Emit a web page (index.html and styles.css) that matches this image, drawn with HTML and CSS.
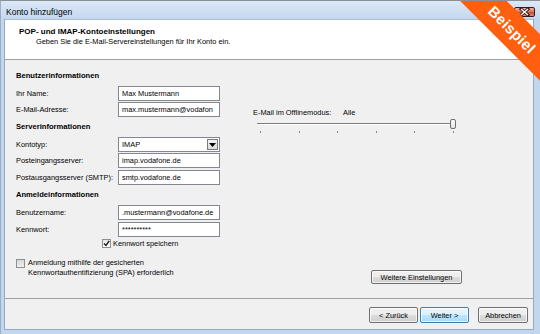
FILE: index.html
```html
<!DOCTYPE html>
<html lang="de">
<head>
<meta charset="utf-8">
<link rel="stylesheet" href="styles.css">
</head>
<body>
<div class="window">
  <div class="titlebar">
    <span class="title">Konto hinzufügen</span>
    <div class="close">
      <svg width="11" height="8" viewBox="0 0 11 8"><path d="M2 1 L9 7 M9 1 L2 7" stroke="#3a1410" stroke-width="3" stroke-linecap="square"/><path d="M2 1 L9 7 M9 1 L2 7" stroke="#ffffff" stroke-width="1.4"/></svg>
    </div>
  </div>
  <div class="client">
    <div class="header">
      <div class="h-title">POP- und IMAP-Kontoeinstellungen</div>
      <div class="h-sub">Geben Sie die E-Mail-Servereinstellungen für Ihr Konto ein.</div>
    </div>
    <div class="body">
      <div class="cols">
        <div class="left">
          <div class="section s1">Benutzerinformationen</div>
          <div class="row m5"><span class="label">Ihr Name:</span><div class="field">Max Mustermann</div></div>
          <div class="row m1"><span class="label">E-Mail-Adresse:</span><div class="field">max.mustermann@vodafon</div></div>
          <div class="section m5">Serverinformationen</div>
          <div class="row m5"><span class="label">Kontotyp:</span><div class="field select"><span>IMAP</span><span class="drop"><svg width="7" height="4" viewBox="0 0 7 4"><path d="M0 0 H7 L3.5 4 Z" fill="#000"/></svg></span></div></div>
          <div class="row m1"><span class="label">Posteingangsserver:</span><div class="field">imap.vodafone.de</div></div>
          <div class="row m2"><span class="label">Postausgangsserver (SMTP):</span><div class="field">smtp.vodafone.de</div></div>
          <div class="section m5">Anmeldeinformationen</div>
          <div class="row m5"><span class="label">Benutzername:</span><div class="field">.mustermann@vodafone.de</div></div>
          <div class="row m2"><span class="label">Kennwort:</span><div class="field">**********</div></div>
          <div class="check-row">
            <span class="checkbox"><svg width="7" height="7" viewBox="0 0 7 7"><path d="M1 3.5 L3 5.5 L6.2 0.8" stroke="#1a1a1a" stroke-width="1.4" fill="none"/></svg></span>
            <span>Kennwort speichern</span>
          </div>
        </div>
        <div class="right">
          <div class="offline"><span class="off-label">E-Mail im Offlinemodus:</span><span>Alle</span></div>
          <div class="slider">
            <div class="track"></div>
            <div class="thumb"></div>
          </div>
          <div class="ticks"><i></i><i></i><i></i><i></i><i></i><i></i></div>
        </div>
      </div>
      <div class="bottom-row">
        <div class="spa">
          <span class="checkbox off"></span>
          <span class="spa-text">Anmeldung mithilfe der gesicherten<br>Kennwortauthentifizierung (SPA) erforderlich</span>
        </div>
        <button class="btn more">Weitere Einstellungen</button>
      </div>
    </div>
    <div class="footer">
      <button class="btn">&lt; Zurück</button>
      <button class="btn default">Weiter &gt;</button>
      <button class="btn cancel">Abbrechen</button>
    </div>
  </div>
  <div class="ribbon">Beispiel</div>
</div>
</body>
</html>
```
FILE: styles.css
```css
* { box-sizing: border-box; }
html, body { margin: 0; padding: 0; }
body {
  width: 540px;
  height: 334px;
  overflow: hidden;
  font-family: "Liberation Sans", Arial, sans-serif;
  font-size: 7.4px;
  color: #000;
}
.window {
  position: relative;
  width: 540px;
  height: 334px;
  overflow: hidden;
  background: #c2d6ee;
  border-top: 1px solid #8a8f96;
  border-left: 1px solid #9aaec6;
}
.titlebar {
  height: 18px;
  display: flex;
  align-items: center;
  padding-left: 5px;
  background: linear-gradient(#dbe8f6, #c4d8ef);
}
.title { font-size: 8.5px; color: #000; margin-top: 4px; }
.close {
  margin-left: auto;
  margin-right: 5px;
  margin-top: 3px;
  width: 21px;
  height: 10px;
  border: 1px solid #3f1a14;
  border-radius: 2px;
  background: linear-gradient(#eab0a4, #d4735f 50%, #c44a36 51%, #d88a72);
  display: flex;
  align-items: center;
  justify-content: center;
}
.close svg { display: block; }
.client {
  margin: 0 6px 0 3px;
  width: 530px;
  border-left: 1px solid #93a9c4;
  border-right: 1px solid #93a9c4;
  border-bottom: 1px solid #93a9c4;
}
.header {
  height: 41px;
  background: #fff;
  border-top: 1px solid #a8c0dc;
  border-bottom: 1px solid #a0a0a0;
  padding: 7px 0 0 14px;
}
.h-title { font-weight: bold; font-size: 8px; line-height: 10px; }
.h-sub { margin-left: 17px; line-height: 10px; }
.body {
  height: 238px;
  background: #f0f0f0;
  padding-left: 11px;
}
.cols { display: flex; }
.left { width: 205px; }
.section { font-weight: bold; font-size: 7.6px; line-height: 10px; height: 10px; }
.s1 { margin-top: 11px; }
.m1 { margin-top: 1px; }
.m2 { margin-top: 2px; }
.m5 { margin-top: 5px; }
.row { display: flex; align-items: center; height: 15px; }
.label { width: 102px; }
.field {
  width: 102px;
  height: 15px;
  background: #fff;
  border: 1px solid #828790;
  padding-left: 3px;
  line-height: 13px;
  white-space: nowrap;
  overflow: hidden;
}
.select { display: flex; align-items: center; }
.drop {
  margin-left: auto;
  margin-right: 1px;
  width: 11px;
  height: 11px;
  border: 1px solid #7a7a7a;
  background: linear-gradient(#f4f4f4, #dcdcdc);
  display: flex;
  align-items: center;
  justify-content: center;
}
.drop svg { display: block; }
.check-row {
  display: flex;
  align-items: center;
  margin-top: 1px;
  margin-left: 86px;
  height: 10px;
  gap: 2px;
}
.checkbox {
  width: 9px;
  height: 9px;
  border: 1px solid #8e8f8f;
  background: linear-gradient(#e6e6e6, #fff);
  display: flex;
  align-items: center;
  justify-content: center;
  flex: none;
}
.checkbox svg { display: block; }
.checkbox.off { background: linear-gradient(#d8d8d8, #efefef); }
.right { margin-left: 32px; padding-top: 48px; width: 206px; }
.offline { line-height: 10px; display: flex; }
.off-label { width: 90px; }
.slider { position: relative; height: 11px; margin-top: 1px; }
.track {
  position: absolute;
  left: 4px;
  right: 4px;
  top: 4px;
  height: 1px;
  background: #7d7d7d;
  box-shadow: 0 1px 0 #fff;
}
.thumb {
  position: absolute;
  left: 197px;
  top: 0;
  width: 6px;
  height: 10px;
  border: 1px solid #6f6f6f;
  border-radius: 2px;
  background: linear-gradient(#ffffff, #e2e2e2);
}
.ticks {
  display: flex;
  justify-content: space-between;
  margin: 1px 5px 0 7px;
}
.ticks i { display: block; width: 1px; height: 2px; background: #8a8a8a; }
.bottom-row { display: flex; align-items: flex-start; margin-top: 10px; }
.spa { width: 355px; display: flex; align-items: flex-start; gap: 3px; }
.spa .checkbox { margin-top: 1px; }
.spa-text { line-height: 10px; }
.btn {
  font-family: "Liberation Sans", Arial, sans-serif;
  font-size: 7.4px;
  color: #000;
  height: 15px;
  padding: 0;
  border: 1px solid #707070;
  border-radius: 2px;
  background: linear-gradient(#f2f2f2 0%, #ebebeb 50%, #dddddd 51%, #cfcfcf 100%);
  box-shadow: inset 0 0 0 1px rgba(255,255,255,0.7);
}
.more { width: 91px; height: 14px; margin-top: 12px; }
.footer {
  height: 31px;
  background: #f0f0f0;
  border-top: 1px solid #a0a0a0;
  display: flex;
  justify-content: flex-end;
  padding: 8px 5px 0 0;
  gap: 2px;
}
.footer .btn { width: 49px; height: 16px; }
.footer .default {
  border-color: #3c7fb1;
  background: linear-gradient(#eaf6fd 0%, #d9f0fc 50%, #bee6fd 51%, #a7d9f5 100%);
}
.footer .cancel { width: 50px; margin-left: 7px; }
.ribbon {
  position: absolute;
  left: 411px;
  top: 12px;
  width: 200px;
  height: 33px;
  transform: rotate(45deg);
  background: #ff5f0f;
  color: #fff;
  font-weight: bold;
  font-size: 15px;
  line-height: 33px;
  text-align: center;
  letter-spacing: 0.3px;
}
```
